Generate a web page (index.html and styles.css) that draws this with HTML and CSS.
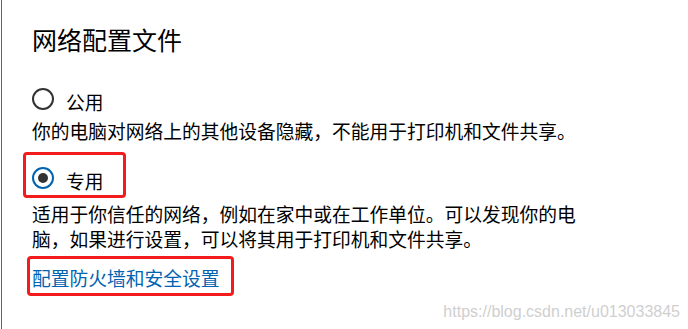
FILE: index.html
```
<!DOCTYPE html>
<html lang="zh-CN">
<head>
<meta charset="utf-8">
<title>网络配置文件</title>
<link rel="stylesheet" href="styles.css">
</head>
<body>
<div class="page">
  <h1 class="title">网络配置文件</h1>
  <div class="option">
    <span class="radio"></span>
    <span class="label">公用</span>
  </div>
  <p class="desc">你的电脑对网络上的其他设备隐藏，不能用于打印机和文件共享。</p>
  <div class="option option-selected mark-option">
    <span class="radio radio-on"><span class="dot"></span></span>
    <span class="label">专用</span>
  </div>
  <p class="desc">适用于你信任的网络，例如在家中或在工作单位。可以发现你的电脑，如果进行设置，可以将其用于打印机和文件共享。</p>
  <a class="link mark-link" href="#">配置防火墙和安全设置</a>
  <div class="watermark">https://blog.csdn.net/u013033845</div>
</div>
</body>
</html>
```
FILE: styles.css
```
html, body {
  margin: 0;
  padding: 0;
  background: #ffffff;
}

body {
  font-family: "Noto Sans CJK SC", "Microsoft YaHei", sans-serif;
  color: #000000;
}

.page {
  position: relative;
  box-sizing: border-box;
  height: 329px;
  margin-left: 1px;
  border-left: 1px solid #2f6db3;
  padding: 24px 0 0 30px;
  overflow: hidden;
}

.title {
  margin: 0;
  font-size: 25px;
  line-height: 30px;
  font-weight: normal;
}

.option {
  position: relative;
  display: flex;
  align-items: center;
  width: fit-content;
  height: 28px;
  margin-top: 33px;
  gap: 12px;
}

.option-selected {
  margin-top: 23px;
}

.radio {
  box-sizing: border-box;
  width: 22px;
  height: 22px;
  margin-bottom: 4px;
  border: 2px solid #333333;
  border-radius: 50%;
  display: flex;
  align-items: center;
  justify-content: center;
}

.radio-on {
  border-color: #0063b1;
}

.dot {
  width: 10px;
  height: 10px;
  border-radius: 50%;
  background: #333333;
}

.label {
  font-size: 18.75px;
  line-height: 25px;
}

.desc {
  margin: 3px 0 0 0;
  width: 555px;
  font-size: 18.75px;
  line-height: 25px;
}

.option-selected + .desc {
  margin-top: 7px;
}

.link {
  position: relative;
  display: block;
  width: fit-content;
  margin-top: 14px;
  font-size: 18.75px;
  line-height: 25px;
  color: #0063b1;
  text-decoration: none;
}

.mark-option::after,
.mark-link::after {
  content: "";
  position: absolute;
  border: 3px solid #f21c1c;
  border-radius: 4px;
}

.mark-option::after {
  top: -14px;
  left: -9px;
  right: -22px;
  bottom: -4px;
}

.mark-link::after {
  top: -9px;
  left: -5px;
  right: -14px;
  bottom: -6px;
}

.watermark {
  position: absolute;
  right: 8px;
  top: 303px;
  font-family: "Liberation Sans", Arial, sans-serif;
  font-size: 16px;
  line-height: 18px;
  color: #cfcfcf;
}
```
